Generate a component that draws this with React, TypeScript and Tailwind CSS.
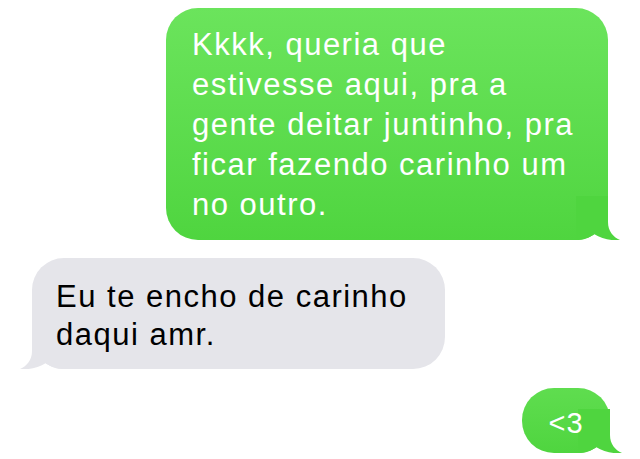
import React from "react";

// Balão de mensagem estilo iOS 7
const TailRight: React.FC<{ color: string }> = ({ color }) => (
  <svg
    className="absolute right-[-12px] bottom-0"
    width="44"
    height="44"
    viewBox="0 0 44 44"
  >
    <path
      d="M0,0 H32 V26 C32,35 37,41 44,44 C36,45 26,43 18,38 C13,42 8,44 0,44 Z"
      fill={color}
    />
  </svg>
);

const TailLeft: React.FC<{ color: string }> = ({ color }) => (
  <svg
    className="absolute left-[-12px] bottom-0"
    width="44"
    height="44"
    viewBox="0 0 44 44"
  >
    <path
      d="M44,0 H12 V26 C12,35 7,41 0,44 C8,45 18,43 26,38 C31,42 36,44 44,44 Z"
      fill={color}
    />
  </svg>
);

export default function App() {
  return (
    <div
      className="w-[640px] h-[459px] bg-white overflow-hidden flex flex-col"
      style={{ fontFamily: '"Liberation Sans", Arial, sans-serif' }}
    >
      {/* mensagem enviada */}
      <div className="relative ml-auto mr-[32px] mt-[8px] w-[442px] h-[232px] rounded-[32px] bg-gradient-to-b from-[#6be45c] to-[#4fd53f] px-[26px] pt-[17px]">
        <p className="relative z-10 text-[31px] leading-[40px] tracking-[1.5px] text-white whitespace-nowrap">
          Kkkk, queria que
          <br />
          estivesse aqui, pra a
          <br />
          gente deitar juntinho, pra
          <br />
          ficar fazendo carinho um
          <br />
          no outro.
        </p>
        <TailRight color="#4fd53f" />
      </div>

      {/* mensagem recebida */}
      <div className="relative ml-[32px] mt-[18px] w-[413px] h-[111px] rounded-[32px] bg-[#e5e5ea] px-[24px] pt-[20px]">
        <p className="relative z-10 text-[31px] leading-[38px] tracking-[1.5px] text-black whitespace-nowrap">
          Eu te encho de carinho
          <br />
          daqui amr.
        </p>
        <TailLeft color="#e5e5ea" />
      </div>

      <div className="relative ml-auto mr-[30px] mt-[19px] w-[88px] h-[65px] rounded-[32px] bg-gradient-to-b from-[#5fdd4f] to-[#4fd53f] flex items-center justify-center pt-[6px]">
        <span className="relative z-10 text-[29px] leading-[39px] tracking-[1px] text-white">&lt;3</span>
        <TailRight color="#4fd53f" />
      </div>
    </div>
  );
}
